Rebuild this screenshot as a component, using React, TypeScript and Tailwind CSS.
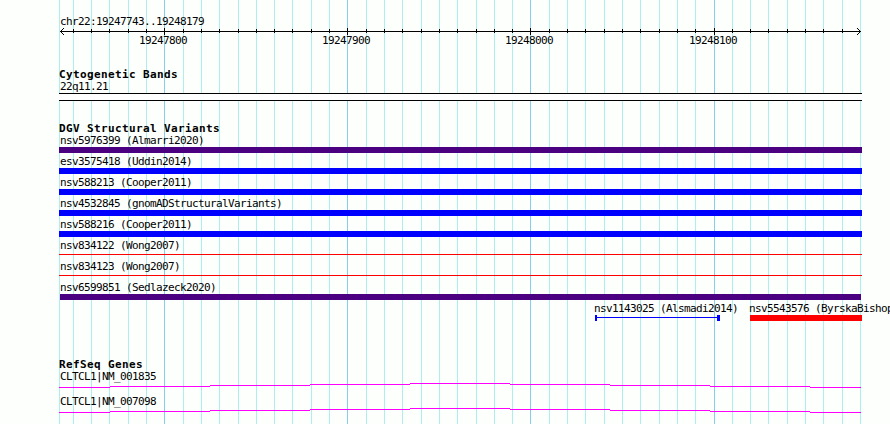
const GRID = [
  59, 73, 91, 109, 128, 146, 164, 183, 201, 219, 238, 256, 274, 292, 311, 329, 347, 366, 384, 402, 421, 439, 457, 476,
  494, 512, 530, 549, 567, 585, 604, 622, 640, 659, 677, 695, 714, 732, 750, 768, 787, 805, 823, 842, 860,
];
const MAJOR = [164, 347, 530, 714];

const VARIANTS = [
  { label: "nsv5976399 (Almarri2020)", bar: "h-1.5 bg-[#4b0082]" },
  { label: "esv3575418 (Uddin2014)", bar: "h-1.5 bg-[#0000ff]" },
  { label: "nsv588213 (Cooper2011)", bar: "h-1.5 bg-[#0000ff]" },
  { label: "nsv4532845 (gnomADStructuralVariants)", bar: "h-1.5 bg-[#0000ff]" },
  { label: "nsv588216 (Cooper2011)", bar: "h-1.5 bg-[#0000ff]" },
  { label: "nsv834122 (Wong2007)", bar: "mt-0.5 h-px bg-[#ff0000]" },
  { label: "nsv834123 (Wong2007)", bar: "mt-0.5 h-px bg-[#ff0000]" },
  { label: "nsv6599851 (Sedlazeck2020)", bar: "ml-px mr-px h-1.5 bg-[#4b0082]" },
];

const GENES = ["CLTCL1|NM_001835", "CLTCL1|NM_007098"];

// x, y and width of each step in an intron line
const STEPS = [
  [0, 4, 51],
  [51, 3, 100],
  [151, 2, 100],
  [251, 1, 100],
  [351, 0, 100],
  [451, 1, 100],
  [551, 2, 100],
  [651, 3, 100],
  [751, 4, 51],
];

function Grid() {
  return (
    <svg className="absolute inset-0" width="890" height="424" shapeRendering="crispEdges">
      {GRID.map((x) => (
        <rect key={x} x={x} y="0" width="1" height="424" fill={MAJOR.includes(x) ? "#87ceeb" : "#afeeee"} />
      ))}
    </svg>
  );
}

function Ruler() {
  return (
    <svg className="block" width="803" height="7" shapeRendering="crispEdges">
      <rect x="1" y="3" width="801" height="1" />
      {GRID.slice(1, -1).map((x) =>
        MAJOR.includes(x) ? (
          <rect key={x} x={x - 59} y="0" width="1" height="7" />
        ) : (
          <rect key={x} x={x - 59} y="1" width="1" height="4" />
        )
      )}
      {/* Arrow heads */}
      {[1, 2, 3].map((d) => (
        <g key={d}>
          <rect x={1 + d} y={3 - d} width="1" height="1" />
          <rect x={1 + d} y={3 + d} width="1" height="1" />
          <rect x={801 - d} y={3 - d} width="1" height="1" />
          <rect x={801 - d} y={3 + d} width="1" height="1" />
        </g>
      ))}
    </svg>
  );
}

function Label({ children }: { children: string }) {
  return <div className="h-[13px] pl-px">{children}</div>;
}

function Title({ children }: { children: string }) {
  return <h2 className="h-3 font-bold leading-[13px] tracking-[0.378px]">{children}</h2>;
}

export default function App() {
  return (
    <div className="relative h-[424px] w-[890px] overflow-hidden whitespace-pre bg-[#fdfffc] font-['DejaVu_Sans_Mono',monospace] text-[11px] leading-[13px] tracking-[-0.622px] text-black">
      <Grid />
      <main className="relative ml-[59px] w-[803px] pt-[15px]">
        <Label>chr22:19247743..19248179</Label>
        <Ruler />
        <div className="-mt-px flex h-[13px] gap-[135px] pl-[80px]">
          <span className="w-12">19247800</span>
          <span className="w-12">19247900</span>
          <span className="w-12">19248000</span>
          <span className="ml-px w-12">19248100</span>
        </div>

        <section className="mt-[21px]">
          <Title>Cytogenetic Bands</Title>
          <Label>22q11.21</Label>
          <div className="h-2 border-y border-black bg-white" />
        </section>

        <section className="mt-[21px]">
          <Title>DGV Structural Variants</Title>
          {VARIANTS.map((v) => (
            <div key={v.label} className="h-[21px]">
              <Label>{v.label}</Label>
              <div className={v.bar} />
            </div>
          ))}
          <div className="flex h-[21px] pl-[535px]">
            <div className="w-[156px]">
              <div className="h-[13px]">nsv1143025 (Alsmadi2014)</div>
              <div className="ml-px flex h-1.5 w-[125px]">
                <div className="w-0.5 bg-[#0000ff]" />
                <div className="mt-0.5 h-px flex-1 bg-[#0000ff]" />
                <div className="w-[3px] bg-[#0000ff]" />
              </div>
            </div>
            <div className="w-28">
              <div className="-ml-px h-[13px]">nsv5543576 (ByrskaBishop</div>
              <div className="h-1.5 bg-[#ff0000]" />
            </div>
          </div>
        </section>

        <section className="mt-[35px]">
          <Title>RefSeq Genes</Title>
          {GENES.map((name) => (
            <div key={name} className="h-[25px]">
              <Label>{name}</Label>
              <svg className="block" width="803" height="5" shapeRendering="crispEdges">
                {STEPS.map(([x, y, w]) => (
                  <rect key={x} x={x} y={y} width={w} height="1" fill="#ff00ff" />
                ))}
              </svg>
            </div>
          ))}
        </section>
      </main>
    </div>
  );
}
